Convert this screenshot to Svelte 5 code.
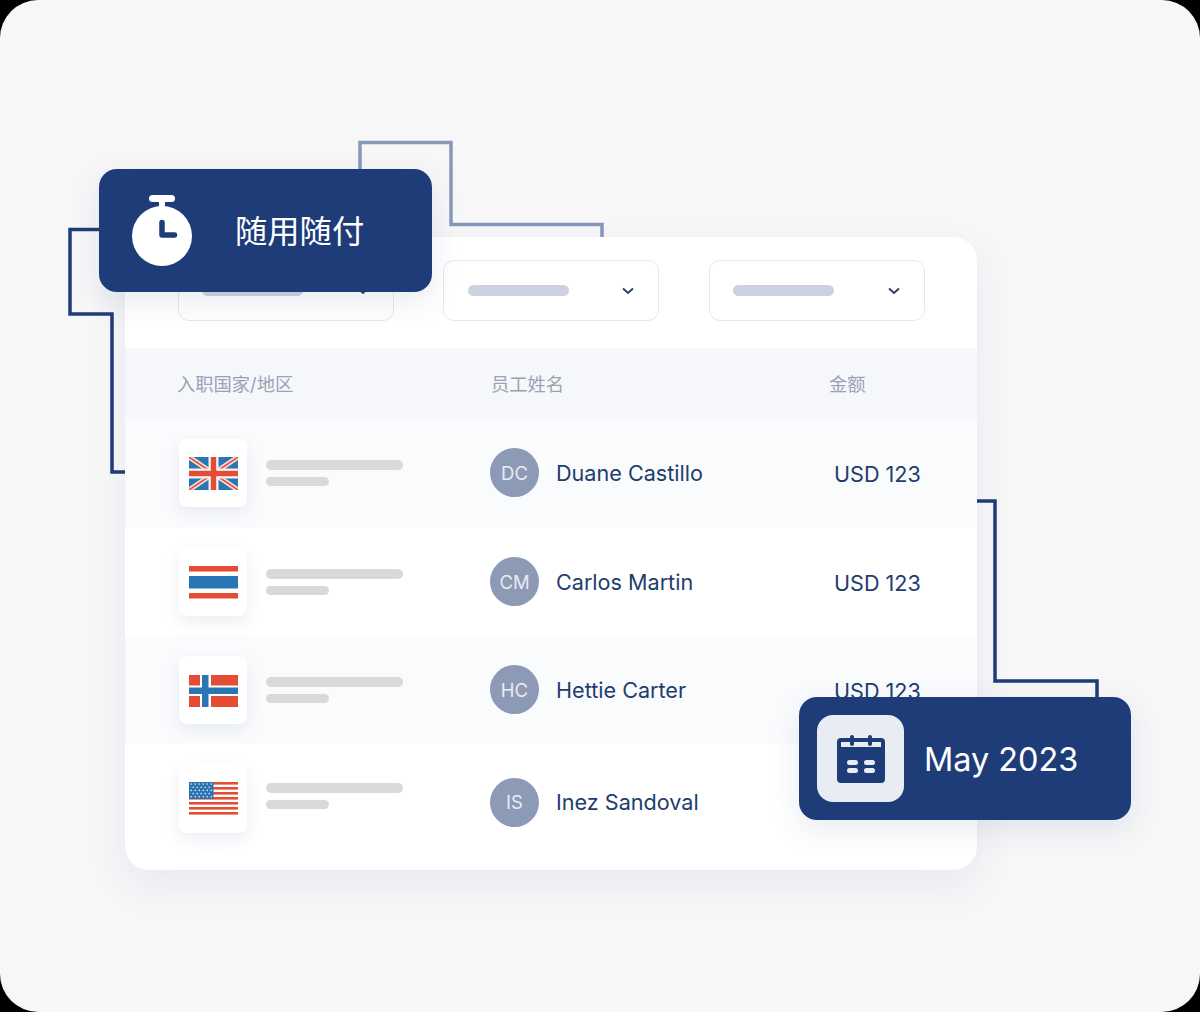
<script lang="ts">
  const selects = [0, 1, 2];
  const rows = [
    { flag: 'uk', initials: 'DC', name: 'Duane Castillo' },
    { flag: 'th', initials: 'CM', name: 'Carlos Martin' },
    { flag: 'no', initials: 'HC', name: 'Hettie Carter' },
    { flag: 'us', initials: 'IS', name: 'Inez Sandoval' }
  ];
  const usStripes = [0, 1, 2, 3, 4, 5, 6];
  const stars = [];
  for (let r = 0; r < 5; r++) {
    for (let c = 0; c < 6 - (r % 2); c++) {
      stars.push({ x: 2.2 + c * 4 + (r % 2) * 2, y: 2 + r * 3.2 });
    }
  }
  const RED = '#e44d33';
  const BLUE = '#2a75b3';
</script>

<div class="stage">
  <svg class="wires" width="1200" height="1012" viewBox="0 0 1200 1012" fill="none">
    <path d="M360 175V142.500H451V224.500H602V240" stroke="#8799bb" stroke-width="3.500" />
    <path d="M105 229.500H70V314H112V472H130" stroke="#1e3d78" stroke-width="3.500" />
    <path d="M970 501H995V681H1097V700" stroke="#1e3d78" stroke-width="3.500" />
  </svg>

  <div class="card">
    <div class="toolbar">
      {#each selects as s}
        <div class="select">
          <span class="select-bar"></span>
          <svg width="12" height="8" viewBox="0 0 12 8" fill="none">
            <path d="M1 1.500L6 6L11 1.500" stroke="#2c3f66" stroke-width="2" />
          </svg>
        </div>
      {/each}
    </div>

    <div class="grid head">
      <span>入职国家/地区</span>
      <span>员工姓名</span>
      <span>金额</span>
    </div>

    {#each rows as row, i}
      <div class="grid row" class:tint={i % 2 === 0} class:first={i === 0} class:last={i === 3}>
        <div class="country">
          <div class="flag">
            <svg width="49" height="33" viewBox="0 0 49 33">
              {#if row.flag === 'uk'}
                <rect width="49" height="33" fill={BLUE} />
                <path d="M0 0L49 33M49 0L0 33" stroke="#f4dcd6" stroke-width="5" />
                <path d="M0 0L49 33M49 0L0 33" stroke={RED} stroke-width="1.500" />
                <rect x="19.500" width="10" height="33" fill="#f4f4f4" />
                <rect y="11.500" width="49" height="10" fill="#f4f4f4" />
                <rect x="21.800" width="5.400" height="33" fill={RED} />
                <rect y="13.800" width="49" height="5.400" fill={RED} />
              {:else if row.flag === 'th'}
                <rect width="49" height="5.500" fill={RED} />
                <rect y="10" width="49" height="12.500" fill={BLUE} />
                <rect y="27" width="49" height="5.500" fill={RED} />
              {:else if row.flag === 'no'}
                <rect y="1" width="49" height="32" fill={RED} />
                <rect x="11" y="1" width="11" height="32" fill="#fff" />
                <rect y="11.500" width="49" height="10.500" fill="#fff" />
                <rect x="13" y="1" width="6.500" height="32" fill={BLUE} />
                <rect y="13.500" width="49" height="6.500" fill={BLUE} />
              {:else}
                {#each usStripes as n}
                  <rect y={n * 5} width="49" height="2.600" fill={RED} />
                {/each}
                <rect width="24.500" height="17" fill={BLUE} />
                {#each stars as star}
                  <circle cx={star.x} cy={star.y} r="0.800" fill="#dfe9f3" />
                {/each}
              {/if}
            </svg>
          </div>
          <div class="lines">
            <span class="line long"></span>
            <span class="line short"></span>
          </div>
        </div>
        <div class="person">
          <span class="avatar">{row.initials}</span>
          <span class="name">{row.name}</span>
        </div>
        <div class="amount">USD 123</div>
      </div>
    {/each}
  </div>

  <div class="badge badge-pay">
    <svg width="62" height="72" viewBox="0 0 62 72">
      <rect x="18" y="0" width="26" height="7" rx="3.500" fill="#fff" />
      <rect x="28" y="5" width="6" height="8" fill="#fff" />
      <circle cx="31" cy="41" r="30" fill="#fff" />
      <path d="M31 27.500V40H43.500" fill="none" stroke="#1e3d78" stroke-width="5.500" stroke-linecap="round" stroke-linejoin="round" />
    </svg>
    <span>随用随付</span>
  </div>

  <div class="badge badge-date">
    <div class="tile">
      <svg width="48" height="48" viewBox="0 0 48 48">
        <rect x="0" y="3" width="48" height="45" rx="4" fill="#1e3d78" />
        <rect x="4" y="7" width="40" height="5" fill="#e8edf4" />
        <rect x="13" y="0" width="4" height="11" rx="2" fill="#1e3d78" />
        <rect x="31" y="0" width="4" height="11" rx="2" fill="#1e3d78" />
        <rect x="10" y="25" width="11" height="5" rx="2.500" fill="#e8edf4" />
        <rect x="27" y="25" width="11" height="5" rx="2.500" fill="#e8edf4" />
        <rect x="10" y="33" width="11" height="5" rx="2.500" fill="#e8edf4" />
        <rect x="27" y="33" width="11" height="5" rx="2.500" fill="#e8edf4" />
      </svg>
    </div>
    <span>May 2023</span>
  </div>
</div>

<style>
  :global(body) {
    margin: 0;
    background: #000;
  }
  .stage {
    position: relative;
    box-sizing: border-box;
    width: 1200px;
    height: 1012px;
    padding: 237px 0 0 125px;
    background: #f7f7f8;
    border-radius: 38px;
    overflow: hidden;
    font-family: Inter, "Noto Sans CJK SC", sans-serif;
  }
  .wires {
    position: absolute;
    left: 0;
    top: 0;
  }

  .card {
    position: relative;
    width: 852px;
    height: 633px;
    background: #fff;
    border-radius: 24px;
    overflow: hidden;
    box-shadow: 0 16px 40px rgba(30, 61, 120, 0.07);
  }
  .toolbar {
    display: flex;
    gap: 49.500px;
    box-sizing: border-box;
    height: 111px;
    padding: 23px 52.500px 0;
  }
  .select {
    display: flex;
    align-items: center;
    justify-content: space-between;
    box-sizing: border-box;
    width: 216px;
    height: 61px;
    padding: 0 24px 0 23.500px;
    border: 1.500px solid #e6e8ec;
    border-radius: 11px;
  }
  .select-bar {
    width: 101px;
    height: 11px;
    border-radius: 6px;
    background: #ccd2e0;
  }

  .grid {
    display: grid;
    grid-template-columns: 312px 339px 1fr;
    padding-left: 53px;
    align-items: center;
  }
  .head {
    grid-template-columns: 314px 338px 1fr;
    padding-left: 52px;
    padding-bottom: 2px;
    box-sizing: border-box;
    height: 71px;
    background: #f5f7fa;
    font-size: 18.300px;
    color: #9aa3b5;
  }
  .row {
    box-sizing: border-box;
    height: 108px;
  }
  .row.tint {
    background: #fafbfd;
  }
  .row.first {
    height: 109px;
    padding-bottom: 1px;
  }
  .row.last {
    height: 126px;
    padding-bottom: 17px;
  }
  .row .person {
    margin-top: -1px;
  }
  .row.last .person {
    margin-top: 7px;
  }
  .row.last .lines {
    margin-top: -5px;
  }

  .country {
    display: flex;
    align-items: center;
    gap: 19px;
    margin-left: 1px;
  }
  .flag {
    display: flex;
    align-items: center;
    justify-content: center;
    width: 68px;
    height: 68px;
    background: #fff;
    border-radius: 8px;
    box-shadow: 0 6px 16px rgba(30, 61, 120, 0.09);
  }
  .lines {
    display: flex;
    flex-direction: column;
    gap: 7px;
  }
  .line {
    height: 9.500px;
    border-radius: 5px;
    background: #d8d9db;
  }
  .long {
    width: 137px;
  }
  .short {
    width: 63px;
  }

  .person {
    display: flex;
    align-items: center;
    gap: 17px;
  }
  .avatar {
    display: flex;
    align-items: center;
    justify-content: center;
    width: 49px;
    height: 49px;
    border-radius: 50%;
    background: #8d9ab6;
    color: #e8ecf3;
    font-size: 18.500px;
  }
  .name,
  .amount {
    font-size: 21.600px;
    color: #1e3d6e;
  }
  .amount {
    padding-left: 5px;
    margin-top: 2px;
  }

  .badge {
    position: absolute;
    display: flex;
    align-items: center;
    box-sizing: border-box;
    height: 123px;
    background: #1e3d78;
    border-radius: 18px;
    color: #fff;
    box-shadow: 0 10px 30px rgba(30, 61, 120, 0.1);
  }
  .badge-pay {
    left: 99px;
    top: 169px;
    width: 333px;
    padding-left: 32px;
    gap: 42px;
    font-size: 32.300px;
  }
  .badge-pay span {
    margin-top: -3px;
  }
  .badge-date {
    left: 799px;
    top: 697px;
    width: 332px;
    padding-left: 18px;
    gap: 20px;
    font-size: 32.400px;
  }
  .badge-date span {
    margin-top: 2px;
  }
  .tile {
    display: flex;
    align-items: center;
    justify-content: center;
    width: 87px;
    height: 87px;
    background: #e8edf4;
    border-radius: 16px;
  }
</style>
